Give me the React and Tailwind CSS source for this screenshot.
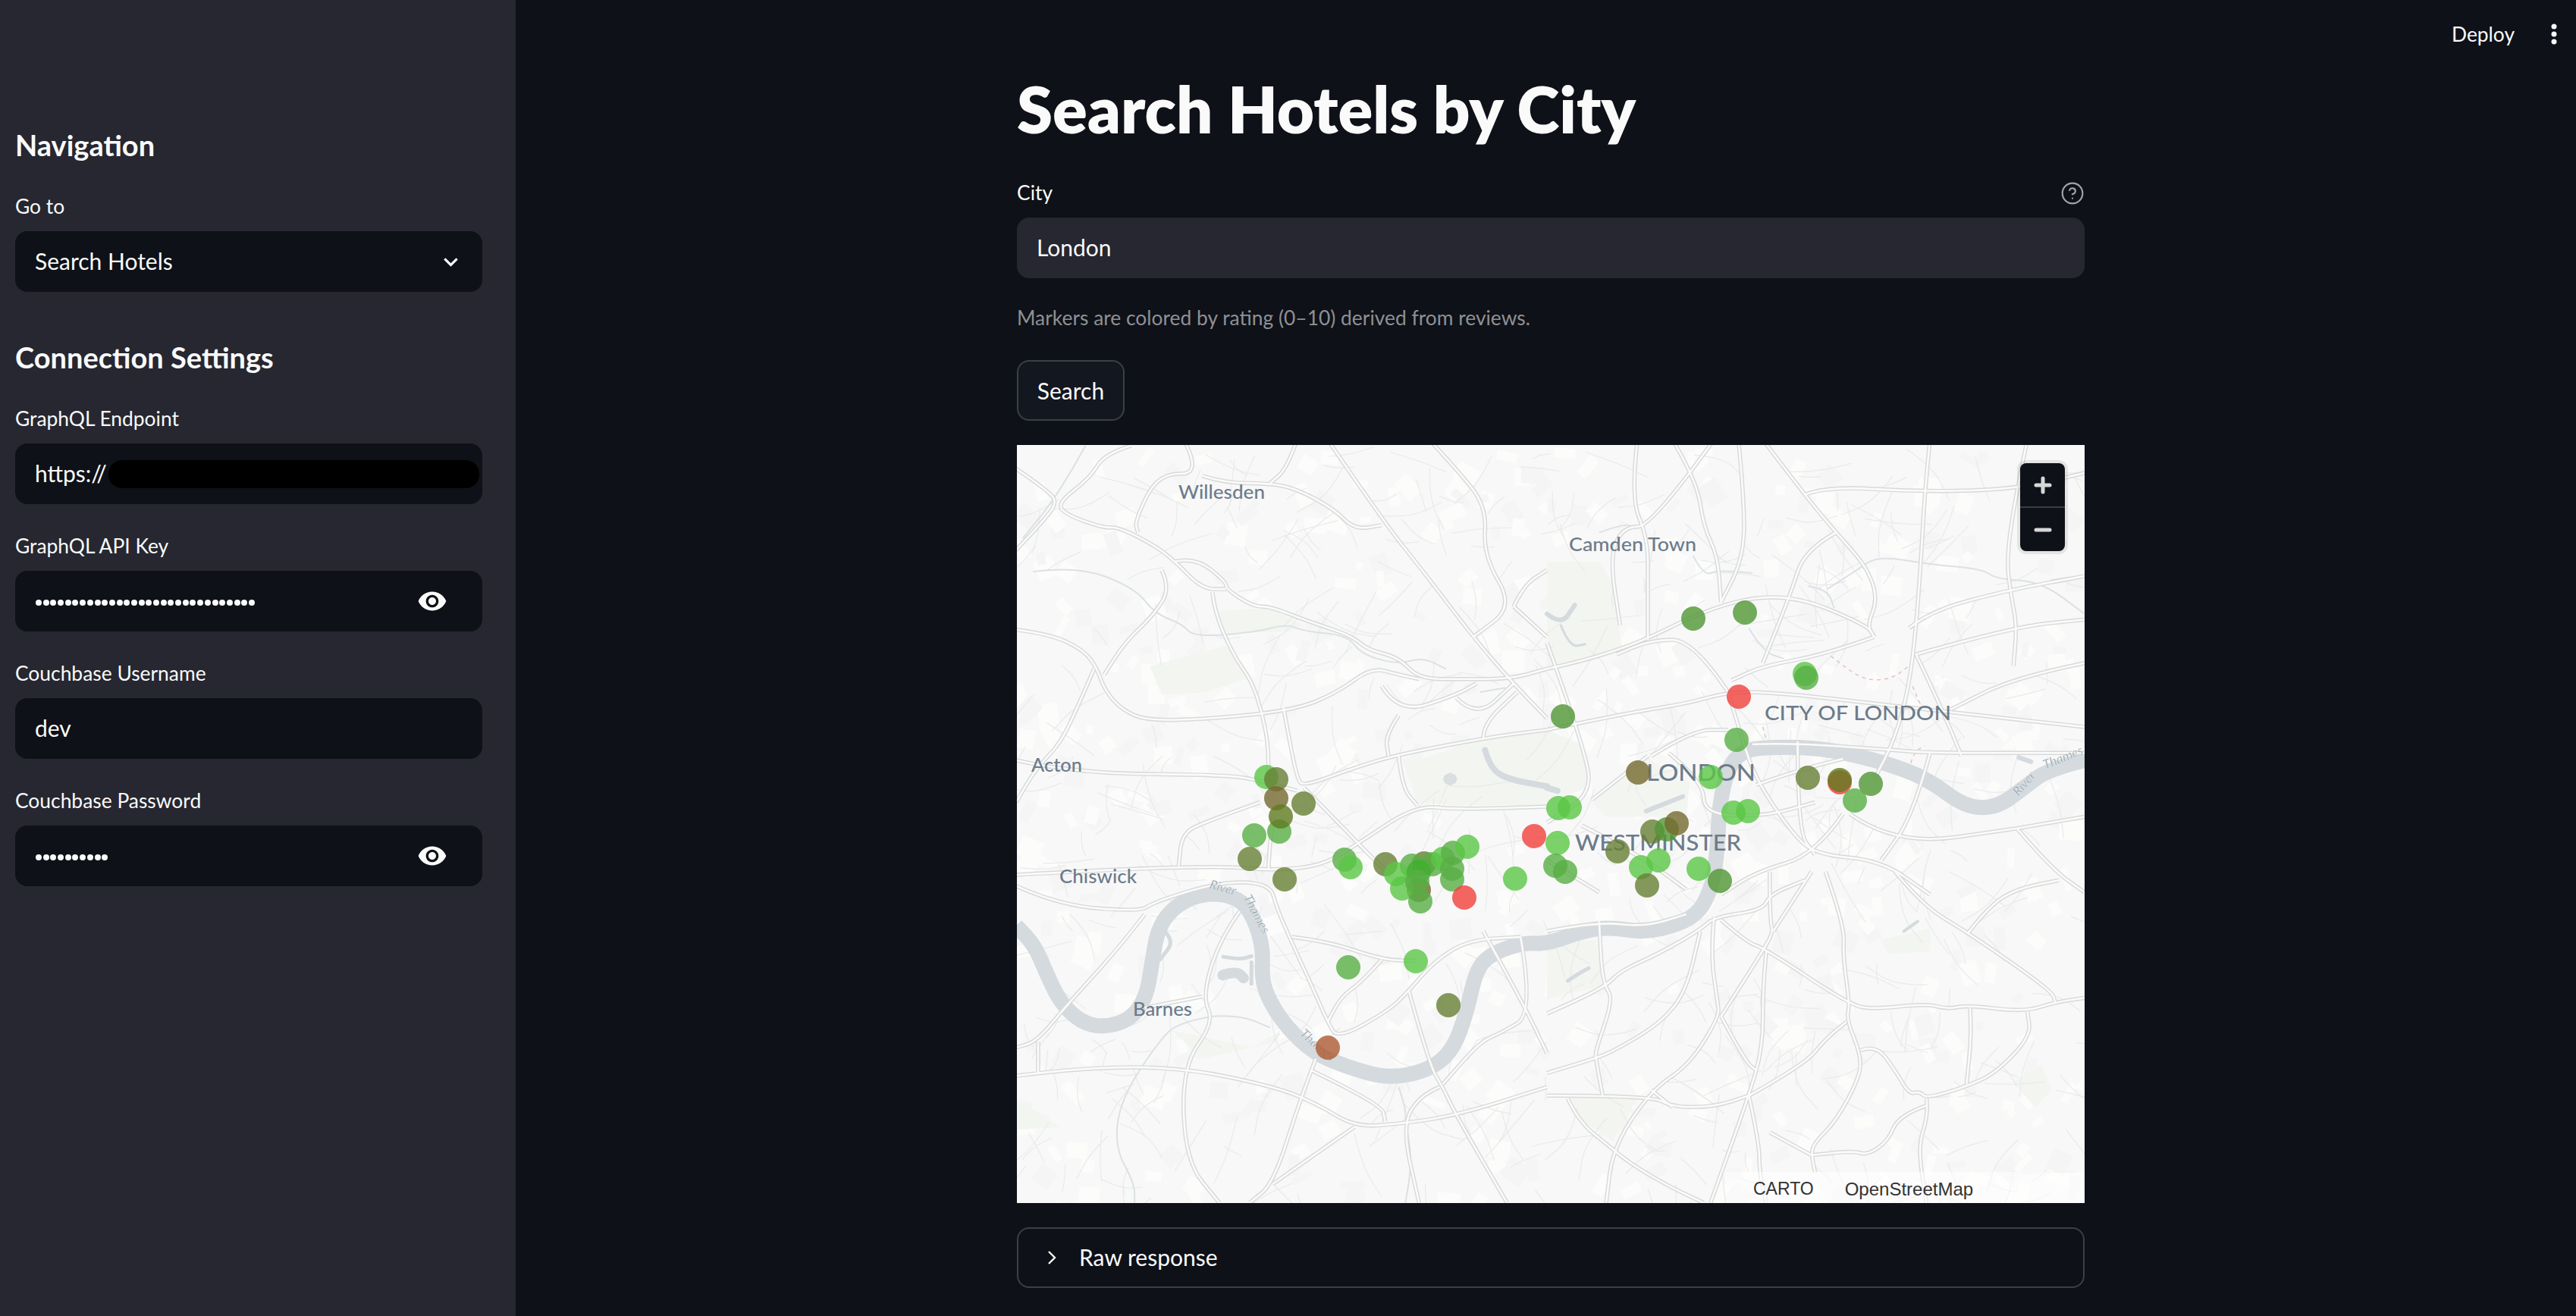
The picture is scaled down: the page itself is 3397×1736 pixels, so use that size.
import React from "react";
import { CircleHelp } from "lucide-react";

// zoom crops -> map coordinates
const z5 = ([x, y]) => [x / 2.24 - 1, y / 2.613 - 7];
const z6 = ([x, y]) => [x / 2.178 + 699, y / 2.613 - 7];
const z7 = ([x, y]) => [x / 2.24 - 1, y / 2.675 + 563];
const z8 = ([x, y]) => [x / 2.178 + 699, y / 2.675 + 563];

const smooth = (pts) => {
  let d = `M${pts[0][0].toFixed(1)} ${pts[0][1].toFixed(1)}`;
  for (let i = 1; i < pts.length - 1; i++) {
    const mx = (pts[i][0] + pts[i + 1][0]) / 2;
    const my = (pts[i][1] + pts[i + 1][1]) / 2;
    d += `Q${pts[i][0].toFixed(1)} ${pts[i][1].toFixed(1)} ${mx.toFixed(1)} ${my.toFixed(1)}`;
  }
  const last = pts[pts.length - 1];
  return d + `L${last[0].toFixed(1)} ${last[1].toFixed(1)}`;
};

const poly = (pts) => pts.map((p) => p.map((n) => n.toFixed(1)).join(",")).join(" ");

const roads5 = [
  [[340,20],[260,50],[220,130],[120,220],[150,260],[260,305],[300,300],[410,365],[470,420],[550,515],[620,515]],
  [[0,100],[100,180],[120,220],[80,280],[0,380]],
  [[495,0],[550,120],[420,115],[350,280],[360,320]],
  [[550,125],[620,150],[750,150],[830,170],[940,240],[1000,310],[1080,295]],
  [[830,0],[800,100],[750,150]],
  [[920,0],[1090,290],[1200,450],[1350,680],[1460,830],[1568,960]],
  [[470,420],[530,405],[620,490],[620,515],[700,575],[750,575],[860,625],[990,675],[1040,725],[1130,750],[1190,825],[1320,825],[1460,825],[1568,790]],
  [[0,655],[100,670],[200,725],[240,790],[260,860],[310,930],[390,970],[600,960],[830,930],[950,870],[1050,785],[1130,810],[1190,825]],
  [[430,450],[455,510],[410,600],[320,700],[260,810]],
  [[580,525],[585,590],[640,740],[695,830],[725,935],[745,1050],[745,1180]],
  [[790,925],[800,990],[830,1170],[850,1195],[1000,1130],[1130,1085],[1400,1025],[1568,1000]],
  [[0,1105],[170,1150],[620,1155],[720,1175],[830,1210]],
  [[720,1250],[550,1320],[490,1360],[480,1470]],
  [[850,1200],[960,1330],[1100,1500],[1200,1568]],
  [[0,1500],[300,1480],[620,1470],[750,1485],[900,1470],[1000,1400],[1180,1260],[1300,1275],[1568,1265]],
  [[1220,0],[1300,100],[1390,230],[1380,400],[1470,575],[1350,680]],
  [[1470,575],[1500,500],[1568,450]],
  [[1470,575],[1568,680]],
  [[1130,950],[1090,1020],[1100,1090]],
  [[1080,850],[1130,945],[1300,880],[1360,840]],
  [[1300,890],[1360,960],[1470,840]],
  [[1380,1030],[1380,980],[1480,870]],
  [[1130,1090],[1140,1200],[1185,1260]],
  [[230,790],[190,900],[130,1050],[60,1130],[0,1250]],
  [[745,1480],[750,1380],[760,1300]],
];

const roads6 = [
  [[740,190],[800,160],[1080,180],[1350,170],[1544,115]],
  [[260,0],[240,200],[290,340],[290,500],[290,690]],
  [[550,0],[570,250],[560,420],[500,560]],
  [[360,0],[430,140],[450,300],[490,400],[500,560]],
  [[480,0],[300,300],[220,300],[180,400],[210,640]],
  [[620,0],[740,190],[830,320],[920,440],[950,550],[920,640],[940,680]],
  [[1100,0],[1085,180],[1075,400],[1060,650],[1040,850],[1000,1030],[940,1170]],
  [[830,320],[740,380],[700,530],[620,770]],
  [[1380,0],[1350,170],[1320,400],[1330,520],[1350,640],[1340,780]],
  [[0,790],[200,740],[490,565],[700,530],[920,640],[940,680]],
  [[1040,650],[1100,590],[1320,520],[1544,470]],
  [[940,680],[800,740],[620,780],[530,830]],
  [[1060,740],[1340,645],[1544,620]],
  [[1060,740],[1100,840],[1160,1000],[1190,1090]],
  [[0,1000],[240,940],[400,910],[520,870],[630,870],[800,890],[1160,940],[1544,990]],
  [[1544,770],[1340,820],[1160,930]],
  [[520,870],[420,690],[300,690],[200,740]],
  [[520,870],[560,1030],[600,1170],[700,1350],[770,1430],[960,1450],[1100,1568]],
  [[720,1040],[720,1350],[770,1430]],
  [[590,1050],[700,1045],[1000,1070],[1100,1080],[1544,1080]],
  [[300,1090],[420,1000],[520,1000]],
  [[350,1080],[450,1180],[450,1290],[620,1300],[770,1250]],
  [[0,700],[120,1100],[120,1230],[0,1320]],
  [[130,1240],[290,1090]],
  [[600,1190],[720,1140],[850,1100]],
  [[850,1290],[770,1430],[600,1490],[500,1568]],
  [[870,1290],[1000,1400],[1350,1340]],
  [[1100,1080],[1050,1300],[960,1450]],
  [[1350,1340],[1450,1480],[1544,1560]],
  [[1350,1340],[1544,1300]],
  [[0,1450],[150,1560]],
  [[100,1330],[250,1420],[400,1550]],
];

const roads7 = [
  [[0,50],[130,120],[370,140],[400,110],[600,35],[750,40],[770,130],[830,290],[880,420],[920,530],[950,590],[1100,490],[1160,420],[1240,310],[1340,240],[1490,230]],
  [[380,150],[310,260],[150,470],[60,600],[0,620]],
  [[65,600],[65,710]],
  [[0,720],[200,690],[490,690],[770,760],[890,820],[1000,900],[1130,890],[1300,860],[1568,760]],
  [[660,140],[600,240],[550,440],[585,530],[490,690],[500,1020],[600,1168]],
  [[550,440],[380,480]],
  [[885,660],[840,800],[760,1100],[690,1168]],
  [[870,700],[1080,820],[1090,880]],
  [[1160,420],[1220,680],[1260,760],[1300,860],[1450,1168]],
  [[1250,760],[1190,790],[1140,900],[1190,1168]],
  [[1080,310],[1020,390],[960,440],[920,530]],
  [[815,230],[920,245],[1080,310],[1180,315]],
  [[1380,210],[1500,470],[1568,640]],
  [[1490,230],[1530,500],[1430,570],[1370,600],[1260,750]],
  [[760,1100],[1000,900]],
];

const roads8 = [
  [[150,175],[155,320],[165,400],[190,450],[140,630],[140,660],[160,790]],
  [[0,210],[145,175],[280,195],[400,150]],
  [[0,500],[160,415],[210,350],[320,290],[440,205],[480,160],[620,135],[640,80],[740,30]],
  [[480,160],[470,290],[490,460],[495,510],[410,680],[300,770],[190,970],[170,1168]],
  [[500,170],[575,250],[625,270],[870,470],[940,485],[1090,465],[1150,485],[1210,470],[1370,495],[1460,460],[1544,445]],
  [[1000,0],[1080,120],[1210,215],[1450,420],[1460,460]],
  [[1210,215],[1270,120],[1350,60],[1470,30]],
  [[640,0],[640,170],[650,210],[625,270],[500,510]],
  [[760,0],[650,210]],
  [[800,0],[855,190],[850,300],[870,470],[860,520],[900,640],[900,720],[830,880],[765,960],[760,1000],[770,1060]],
  [[630,280],[620,400],[620,620],[580,790],[470,1168]],
  [[500,510],[570,670],[600,700]],
  [[580,790],[610,960],[610,1060],[630,1168]],
  [[580,790],[740,680],[800,590],[860,530]],
  [[0,710],[140,660],[210,620],[330,530],[400,420],[440,210]],
  [[0,790],[300,790],[360,830],[480,830],[580,790]],
  [[300,770],[360,830]],
  [[60,800],[90,880],[180,970],[240,1030],[350,1110],[450,1168]],
  [[900,630],[945,610],[1000,700],[1040,785],[1070,775],[1090,800],[1200,760],[1290,710],[1390,580],[1380,495]],
  [[1090,800],[1095,860],[1065,970],[1090,1168]],
  [[1090,825],[1010,860],[980,950],[920,1000],[880,985],[760,1000]],
  [[1215,480],[1220,570],[1205,750]],
  [[640,920],[760,1000]],
];

const roads = [...roads5.map((r) => r.map(z5)), ...roads6.map((r) => r.map(z6)), ...roads7.map((r) => r.map(z7)), ...roads8.map((r) => r.map(z8))];

const thames = [
  ...[[1560,1100],[1440,1135],[1370,1200],[1290,1270],[1200,1265],[1100,1175],[1000,1125],[880,1085],[760,1060],[620,1060],[560,1075],[520,1130],[495,1260],[490,1400],[480,1500]].map(z6),
  ...[[470,60],[440,140],[380,185],[280,215],[180,195],[100,210],[0,255]].map(z8),
  ...[[1500,250],[1410,285],[1360,340],[1330,500],[1290,630],[1220,700],[1100,730],[980,690],[880,640],[800,550],[750,460],[725,380],[730,260],[690,130],[640,85],[560,75],[480,110],[420,190],[400,330],[385,440],[340,520],[260,550],[190,530],[130,460],[90,360],[55,260],[0,190]].map(z7),
];

const water = [
  [[[1385,1070],[1400,1130],[1450,1170],[1568,1195]].map(z5), 8],
  [[[0,1200],[30,1210]].map(z6), 8],
  [[[0,600],[40,640],[80,570]].map(z6), 6],
  [[[40,640],[65,715],[110,705]].map(z6), 3],
  [[[285,1280],[390,1230]].map(z6), 6],
  [[[430,200],[470,240],[425,310]].map(z7), 5],
  [[[1450,490],[1500,480]].map(z6), 6],
  [[[1355,1095],[1390,1110]].map(z6), 6],
  [[[60,385],[90,360],[120,340]].map(z8), 5],
  [[[1025,210],[1065,175]].map(z8), 4],
  [[[612,300],[660,310],[695,298]].map(z7), 5],
  [[[610,365],[650,350],[672,375]].map(z7), 14],
  [[[695,320],[695,395]].map(z7), 5],
];

const ponds = [
  [[1282,1148],[1298,1156],[1303,1170],[1298,1184],[1282,1192],[1266,1184],[1261,1170],[1266,1156]].map(z5),
];

const canals = [
  [[205,20],[130,180],[20,340]].map(z5),
  [[50,455],[180,435],[350,510],[410,600],[490,635],[525,680],[700,665],[800,635],[850,660],[980,675],[1020,740],[1130,775],[1200,750],[1270,790]].map(z5),
  [[1370,870],[1445,855]].map(z5),
  [[150,320],[220,290],[250,300]].map(z6),
  [[420,400],[450,470],[490,450],[590,460]].map(z6),
  [[750,505],[805,515],[825,580]].map(z6),
  [[805,515],[890,450],[950,400],[1100,430],[1250,445],[1290,480],[1420,490],[1544,600]].map(z6),
  [[580,650],[620,730],[680,755]].map(z6),
  [[580,510],[480,530],[420,600],[310,800],[290,970],[350,1100],[350,1168]].map(z7),
  [[580,510],[660,505],[750,550]].map(z7),
  [[1130,760],[1150,830],[1150,880],[1170,1020],[1150,1168]].map(z7),
];

const parks = [
  [[1200,1100],[1380,1030],[1568,1000],[1568,1260],[1300,1260],[1185,1250],[1140,1100]].map(z5),
  [[0,1000],[100,1050],[120,1200],[0,1250]].map(z6),
  [[0,420],[150,420],[190,500],[215,720],[100,760],[0,780]].map(z6),
  [[120,1240],[290,1100],[410,1180],[400,1300],[290,1300],[170,1300]].map(z6),
  [[590,590],[750,580],[850,640],[810,660],[620,670]].map(z5),
  [[395,780],[620,710],[690,820],[560,870],[430,880]].map(z5),
  [[70,800],[260,800],[190,950],[100,880]].map(z8),
  [[0,800],[130,900],[0,910]].map(z7),
  [[460,560],[700,620],[780,560],[770,600],[550,660]].map(z7),
  [[0,260],[140,240],[165,400],[0,450]].map(z8),
  [[960,240],[1100,200],[1100,280],[980,290]].map(z8),
  [[1340,740],[1420,680],[1450,770],[1400,830]].map(z8),
];

const dashed = [
  [[815,745],[860,790],[920,830],[990,825],[1040,780]].map(z6),
  [[1050,850],[1075,920]].map(z6),
  [[620,990],[630,1035]].map(z6),
  [[1045,1115],[1055,1075],[1085,1055]].map(z6),
];

// faint city blocks and back streets
const rng = (() => {
  let s = 1234567;
  return () => {
    s = (s + 0x6d2b79f5) | 0;
    let t = Math.imul(s ^ (s >>> 15), 1 | s);
    t = (t + Math.imul(t ^ (t >>> 7), 61 | t)) ^ t;
    return ((t ^ (t >>> 14)) >>> 0) / 4294967296;
  };
})();

const patches = Array.from({ length: 700 }, () => ({
  x: rng() * 1408,
  y: rng() * 1000,
  w: 8 + rng() * 24,
  h: 8 + rng() * 22,
  r: rng() * 90,
  fill: rng() > 0.4 ? "#fcfcfb" : "#f5f5f5",
}));

const backStreets = Array.from({ length: 560 }, () => {
  const x = rng() * 1408;
  const y = rng() * 1000;
  const a = rng() * Math.PI;
  const l = 24 + rng() * 70;
  const b = (rng() - 0.5) * 0.7;
  return [
    [x, y],
    [x + (Math.cos(a) * l) / 2, y + (Math.sin(a) * l) / 2],
    [x + Math.cos(a + b) * l, y + Math.sin(a + b) * l],
  ];
});

const LT = "#5ac745";
const GR = "#57ae43";
const MD = "#509633";
const OL = "#667f34";
const DK = "#5f7a1f";
const BR = "#74692e";
const RD = "#f0403a";
const TC = "#ad5a32";

const markers = [
  [1085,445,RD],[329,438,LT],[342,441,OL],[342,466,BR],[378,473,OL],[346,510,GR],[348,490,DK],[313,515,GR],[307,546,OL],[353,573,OL],
  [432,547,GR],[440,557,LT],[486,553,OL],[530,587,BR],[537,552,OL],[521,555,GR],[548,553,GR],[562,546,LT],[575,538,GR],[594,530,LT],
  [500,566,LT],[508,585,LT],[574,559,GR],[574,573,GR],[530,563,"#3fb02f"],[528,576,GR],[532,602,GR],[590,597,RD],[682,516,RD],[657,572,LT],
  [437,689,GR],[526,681,LT],[569,739,OL],[410,795,TC],[892,229,MD],[960,221,MD],[1039,302,LT],[1041,307,GR],[952,332,RD],[720,358,MD],
  [949,389,GR],[819,432,BR],[915,438,LT],[1043,439,OL],[1085,442,DK],[1126,447,MD],[1105,469,GR],[945,485,LT],[964,483,LT],[714,479,LT],
  [729,478,LT],[838,510,OL],[857,507,MD],[870,499,BR],[713,525,LT],[792,536,OL],[846,548,LT],[823,557,LT],[899,559,LT],[927,575,MD],
  [831,581,OL],[710,555,GR],[723,563,GR],
];

const labels = [
  ["Willesden", 213, 71, 24, 114, "500"],
  ["Acton", 19, 431, 24, 67, "500"],
  ["Chiswick", 56, 578, 24, 102, "500"],
  ["Camden Town", 728, 140, 24, 168, "500"],
  ["Barnes", 153, 753, 24, 78, "500"],
  ["CITY OF LONDON", 986, 363, 27, 246, "500"],
  ["LONDON", 830, 443, 31, 144, "500"],
  ["WESTMINSTER", 736, 535, 29, 219, "500"],
];

const riverLabels = [
  ["River", 253, 585, 15],
  ["Thames", 298, 597, 62],
  ["Thames", 372, 778, 42],
  ["River", 1321, 464, -50],
  ["Thames", 1356, 428, -22],
];

function LondonMap() {
  return (
    <svg viewBox="0 0 1408 1000" className="block w-full h-full">
      <rect width="1408" height="1000" fill="#f8f8f8" />
      {patches.map((p, i) => (
        <rect key={i} x={p.x} y={p.y} width={p.w} height={p.h} fill={p.fill} transform={`rotate(${p.r} ${p.x} ${p.y})`} />
      ))}
      {parks.map((p, i) => (
        <polygon key={i} points={poly(p)} fill="#f3f5f1" />
      ))}
      {backStreets.map((p, i) => (
        <path key={i} d={smooth(p)} fill="none" stroke="#e9eaea" strokeWidth="1.2" />
      ))}
      <path d={smooth(thames)} fill="none" stroke="#d4dadd" strokeWidth="20" />
      {water.map(([p, w], i) => (
        <path key={i} d={smooth(p)} fill="none" stroke="#d4dadd" strokeWidth={w} strokeLinecap="round" />
      ))}
      {ponds.map((p, i) => (
        <polygon key={i} points={poly(p)} fill="#d9dee0" />
      ))}
      {canals.map((p, i) => (
        <path key={i} d={smooth(p)} fill="none" stroke="#dbe1e4" strokeWidth="2" />
      ))}
      {dashed.map((p, i) => (
        <path key={i} d={smooth(p)} fill="none" stroke="#e3c6c8" strokeWidth="1.6" strokeDasharray="5 5" />
      ))}
      {roads.map((p, i) => (
        <path key={i} d={smooth(p)} fill="none" stroke="#d8d9d9" strokeWidth="5.5" strokeLinejoin="round" />
      ))}
      {roads.map((p, i) => (
        <path key={i} d={smooth(p)} fill="none" stroke="#fbfbfb" strokeWidth="2.6" strokeLinejoin="round" />
      ))}
      {riverLabels.map(([t, x, y, r], i) => (
        <text key={i} x={x} y={y} transform={`rotate(${r} ${x} ${y})`} fontFamily="Lato, sans-serif" fontStyle="italic" fontSize="17" fill="#8497a3" stroke="#f8f8f8" strokeWidth="0.4">
          {t}
        </text>
      ))}
      {labels.map(([t, x, y, s, w, fw], i) => (
        <text key={i} x={x} y={y} textLength={w} lengthAdjust="spacingAndGlyphs" fontFamily="Lato, sans-serif" fontWeight={fw} fontSize={s} fill="#6c7b8b">
          {t}
        </text>
      ))}
      {markers.map(([x, y, c], i) => (
        <circle key={i} cx={x} cy={y} r="16" fill={c} fillOpacity="0.8" />
      ))}
    </svg>
  );
}

function Label({ children }) {
  return <div className="h-[40px] mb-[12px] leading-[38px] text-[26.4px] text-[#fafafa]">{children}</div>;
}

function Eye() {
  return (
    <svg viewBox="0 0 24 24" className="w-[40px] h-[40px]" fill="#fafafa">
      <path d="M12 4.5C7 4.5 2.73 7.61 1 12c1.73 4.39 6 7.5 11 7.5s9.27-3.11 11-7.5c-1.73-4.39-6-7.5-11-7.5zM12 17c-2.76 0-5-2.24-5-5s2.24-5 5-5 5 2.24 5 5-2.24 5-5 5zm0-8c-1.66 0-3 1.34-3 3s1.34 3 3 3 3-1.34 3-3-1.34-3-3-3z" />
    </svg>
  );
}

function PasswordField({ label, count }) {
  return (
    <div className="mt-[36px]">
      <Label>{label}</Label>
      <div className="h-[80px] rounded-[16px] bg-[#0e1117] flex items-center justify-between pl-[27px] pr-[46px]">
        <div className="flex gap-[1.7px] mt-[4px]">
          {Array.from({ length: count }, (_, i) => (
            <span key={i} className="w-[8px] h-[8px] rounded-full bg-[#fafafa]" />
          ))}
        </div>
        <Eye />
      </div>
    </div>
  );
}

export default function App() {
  return (
    <div className="flex w-full h-screen overflow-hidden bg-[#0e1117] text-[#fafafa] [font-family:Lato,sans-serif]">
      <aside className="w-[680px] shrink-0 bg-[#262730] pt-[168px] pl-[20px] pr-[44px]">
        <h2 className="h-[50px] leading-[47px] text-[38px] font-bold">Navigation</h2>
        <div className="mt-[35px]">
          <Label>Go to</Label>
          <div className="h-[80px] rounded-[16px] bg-[#0e1117] flex items-center justify-between pl-[26px] pr-[23px]">
            <span className="text-[30px] leading-[36px] -mt-[2px]">Search Hotels</span>
            <svg viewBox="0 0 24 24" className="w-[37px] h-[37px]" fill="#fafafa">
              <path d="M16.59 8.59L12 13.17 7.41 8.59 6 10l6 6 6-6z" />
            </svg>
          </div>
        </div>

        <h2 className="mt-[62px] h-[50px] leading-[48px] text-[38px] font-bold">Connection Settings</h2>
        <div className="mt-[36px]">
          <Label>GraphQL Endpoint</Label>
          <div className="relative h-[80px] rounded-[16px] bg-[#0e1117] flex items-center pl-[26px]">
            <span className="text-[30px] leading-[36px] -mt-[2px]">https://</span>
            <div className="absolute left-[123px] top-[22px] w-[489px] h-[37px] rounded-[18px] bg-black" />
          </div>
        </div>
        <PasswordField label="GraphQL API Key" count={30} />
        <div className="mt-[36px]">
          <Label>Couchbase Username</Label>
          <div className="h-[80px] rounded-[16px] bg-[#0e1117] flex items-center pl-[26px]">
            <span className="text-[30px] leading-[36px] -mt-[2px]">dev</span>
          </div>
        </div>
        <PasswordField label="Couchbase Password" count={10} />
      </aside>

      <main className="flex-1 min-w-0">
        <header className="h-[90px] flex items-center justify-end gap-[32px] pr-[9px]">
          <span className="text-[26.4px] leading-[36px]">Deploy</span>
          <svg viewBox="0 0 24 24" className="w-[40px] h-[40px]" fill="#fafafa">
            <circle cx="12" cy="6" r="2.1" />
            <circle cx="12" cy="12" r="2.1" />
            <circle cx="12" cy="18" r="2.1" />
          </svg>
        </header>

        <div className="ml-[661px] w-[1408px]">
          <h1 className="h-[110px] leading-[106px] text-[85px] font-extrabold">Search Hotels by City</h1>
          <div className="mt-[35px] h-[40px] mb-[12px] flex items-center justify-between">
            <span className="text-[26.4px] leading-[36px] -mt-[2px]">City</span>
            <CircleHelp size={32} strokeWidth={1.6} className="text-[#a3a4a8]" />
          </div>
          <div className="h-[80px] rounded-[16px] bg-[#262730] flex items-center pl-[26px]">
            <span className="text-[30px] leading-[36px] -mt-[2px]">London</span>
          </div>
          <p className="mt-[33px] h-[40px] leading-[39px] text-[26.4px] text-[#8f9095]">Markers are colored by rating (0–10) derived from reviews.</p>
          <button className="mt-[35px] block h-[80px] w-[142px] rounded-[16px] border-2 border-[#3d3f46] bg-[#131720] text-[30px] text-[#fafafa]">Search</button>

          <div className="relative mt-[32px] h-[1000px] overflow-hidden">
            <LondonMap />
            <div className="absolute right-[26px] top-[24px] w-[59px] rounded-[8px] bg-[#0e1117] shadow-[0_0_0_4px_rgba(0,0,0,0.08)] flex flex-col">
              <div className="h-[59px] flex items-center justify-center border-b-2 border-[#3a3d44]">
                <svg viewBox="0 0 24 24" className="w-[24px] h-[24px]" fill="none" stroke="#d7d7d7" strokeWidth="5" strokeLinecap="round">
                  <path d="M12 3v18M3 12h18" />
                </svg>
              </div>
              <div className="h-[57px] flex items-center justify-center">
                <svg viewBox="0 0 24 24" className="w-[24px] h-[24px]" fill="none" stroke="#d7d7d7" strokeWidth="5" strokeLinecap="round">
                  <path d="M3 12h18" />
                </svg>
              </div>
            </div>
            <div className="absolute right-0 bottom-0 w-[473px] h-[41px] bg-white/50 pl-[36px] flex items-center gap-[41px] pt-[4px] [font-family:'Liberation_Sans',sans-serif] text-[#333]">
              <span className="text-[23px]">CARTO</span>
              <span className="text-[24px]">OpenStreetMap</span>
            </div>
          </div>

          <div className="mt-[32px] h-[80px] rounded-[16px] border-2 border-[#3d3f46] flex items-center pl-[38px]">
            <svg viewBox="0 0 12 20" className="w-[12px] h-[20px]" fill="none" stroke="#fafafa" strokeWidth="2.4">
              <path d="M2 2l8 8-8 8" />
            </svg>
            <span className="ml-[30px] text-[30px] leading-[36px] -mt-[2px]">Raw response</span>
          </div>
        </div>
      </main>
    </div>
  );
}
